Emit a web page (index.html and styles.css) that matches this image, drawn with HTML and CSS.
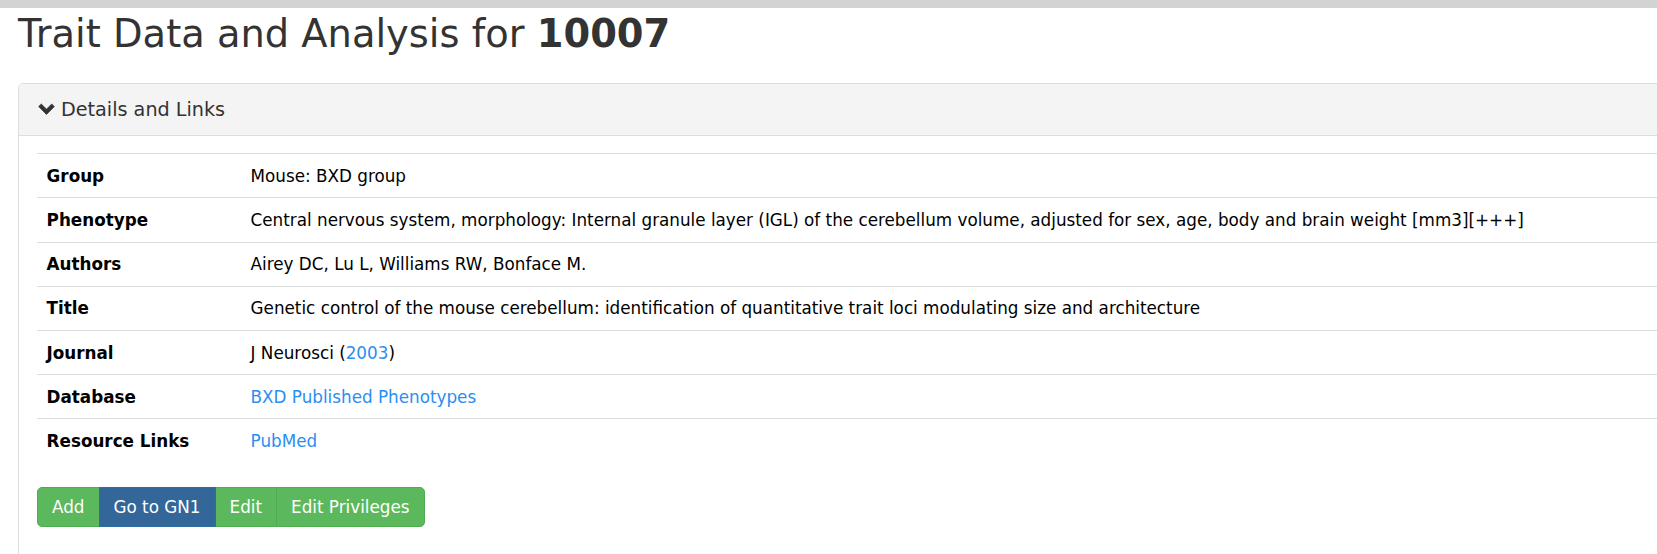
FILE: index.html
```html
<!DOCTYPE html>
<html lang="en">
<head>
<meta charset="utf-8">
<title>Trait Data and Analysis for 10007</title>
<link rel="stylesheet" href="styles.css">
</head>
<body>
<div class="topbar"></div>
<div class="container">
  <h1 class="page-title">Trait Data and Analysis for <b>10007</b></h1>
  <div class="panel">
    <div class="panel-heading">
      <svg class="chevron" viewBox="0 0 17 12" width="17" height="12" aria-hidden="true"><path fill="#333" stroke="#333" stroke-width="0.8" stroke-linejoin="round" d="M0.7 3.6 L3.3 1 L8.5 6.2 L13.7 1 L16.3 3.6 L8.5 11.4 Z"/></svg>
      <span>Details and Links</span>
    </div>
    <div class="panel-body">
      <table class="details">
        <tr><td class="label">Group</td><td>Mouse: BXD group</td></tr>
        <tr><td class="label">Phenotype</td><td>Central nervous system, morphology: Internal granule layer (IGL) of the cerebellum volume, adjusted for sex, age, body and brain weight [mm3][+++]</td></tr>
        <tr><td class="label">Authors</td><td>Airey DC, Lu L, Williams RW, Bonface M.</td></tr>
        <tr><td class="label">Title</td><td>Genetic control of the mouse cerebellum: identification of quantitative trait loci modulating size and architecture</td></tr>
        <tr><td class="label">Journal</td><td>J Neurosci (<a href="#">2003</a>)</td></tr>
        <tr><td class="label">Database</td><td><a href="#">BXD Published Phenotypes</a></td></tr>
        <tr><td class="label">Resource Links</td><td><a href="#">PubMed</a></td></tr>
      </table>
      <div class="btn-group">
        <button class="btn btn-success">Add</button><button class="btn btn-primary">Go to GN1</button><button class="btn btn-success">Edit</button><button class="btn btn-success">Edit Privileges</button>
      </div>
    </div>
  </div>
</div>
</body>
</html>
```

FILE: styles.css
```css
html, body {
  overflow: hidden;
}
body {
  margin: 0;
  font-family: "DejaVu Sans", Verdana, sans-serif;
  color: #333;
  background: #fff;
}
.topbar {
  height: 8px;
  background: #d3d3d3;
}
.container {
  padding: 0 0 0 18px;
}
.page-title {
  margin: 5px 0 0;
  font-size: 38.4px;
  line-height: 42.24px;
  font-weight: normal;
  color: #333;
}
.page-title b {
  font-weight: bold;
}
.panel {
  margin-top: 28px;
  width: 1720px;
  border: 1px solid #ddd;
  border-radius: 5px;
  padding-bottom: 60px;
}
.panel-heading {
  display: flex;
  align-items: center;
  background: #f4f4f4;
  border-bottom: 1px solid #ddd;
  padding: 12px 18px;
  font-size: 19.2px;
  line-height: 27px;
  color: #333;
  border-radius: 4px 4px 0 0;
}
.chevron {
  display: block;
  flex-shrink: 0;
  margin: 0 6px 2px 1px;
}
.panel-body {
  padding: 17px 18px;
}
.details {
  width: 100%;
  border-collapse: collapse;
  margin-bottom: 24px;
  font-size: 16.8px;
  color: #000;
}
.details td {
  padding: 9.6px;
  line-height: 24px;
  border-top: 1px solid #ddd;
  vertical-align: top;
}
.details td.label {
  width: 184.8px;
  font-weight: bold;
}
.details a {
  color: #2a8ef2;
  text-decoration: none;
}
.btn-group {
  display: inline-flex;
}
.btn {
  font-family: inherit;
  font-size: 16.8px;
  line-height: 24px;
  padding: 7px 14px;
  border: 1px solid;
  color: #fff;
  margin: 0;
  border-radius: 0;
}
.btn + .btn {
  margin-left: -1px;
}
.btn:first-child {
  border-radius: 5px 0 0 5px;
}
.btn:last-child {
  border-radius: 0 5px 5px 0;
}
.btn-success {
  background: #5cb85c;
  border-color: #4cae4c;
}
.btn-primary {
  background: #336699;
  border-color: #2e6da4;
  position: relative;
}
```
